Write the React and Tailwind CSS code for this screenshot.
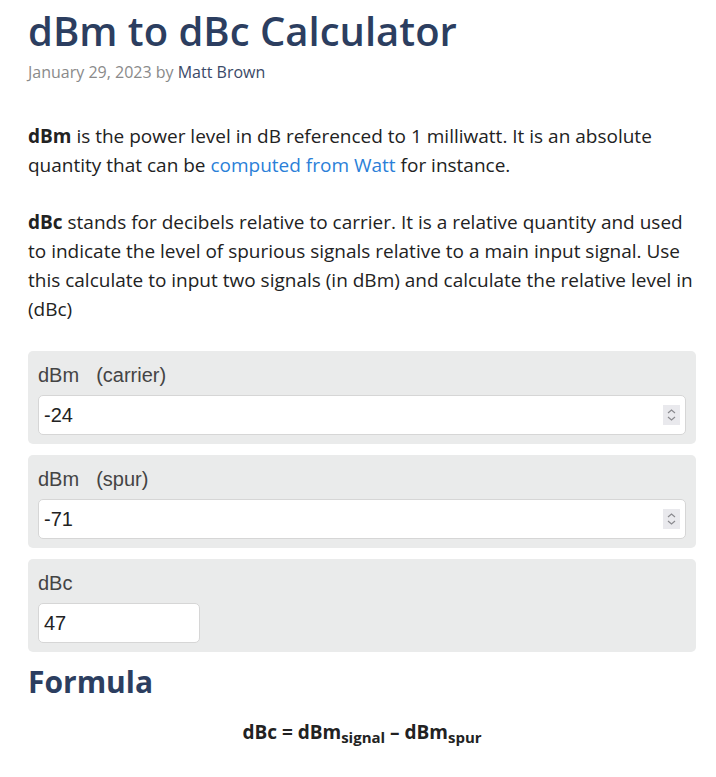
import React from "react";

function Spinner() {
  return (
    <div className="absolute right-[6px] top-1/2 -translate-y-1/2 w-[17px] h-[20px] bg-[#e9e9ed] flex items-center justify-center">
      <svg width="9" height="14" viewBox="0 0 9 14" fill="none" stroke="#8a8a8f" strokeWidth="1.2">
        <path d="M1 5 L4.5 2 L8 5" />
        <path d="M1 9 L4.5 12 L8 9" />
      </svg>
    </div>
  );
}

function Field({ label, sub, value, narrow, spin }) {
  return (
    <div className="bg-[#eaebeb] rounded-[5px] px-[10px] pt-[12px] pb-[9px]">
      <div className="text-[20px] leading-[24px] text-[#444] mb-[8px]" style={{ fontFamily: '"Liberation Sans", Arial, sans-serif' }}>
        {label}
        {sub && <span className="ml-[17px]">{sub}</span>}
      </div>
      <div className={"relative " + (narrow ? "w-[162px]" : "w-full")}>
        <input
          readOnly
          value={value}
          className="w-full h-[40px] bg-white border border-[#d6d6d6] rounded-[5px] px-[5px] text-[20px] text-[#222] outline-none"
          style={{ fontFamily: '"Liberation Sans", Arial, sans-serif' }}
        />
        {spin && <Spinner />}
      </div>
    </div>
  );
}

export default function App() {
  return (
    <div className="bg-white min-h-[777px] pl-[28px] pr-[20px] pt-[6px]" style={{ fontFamily: '"Open Sans", sans-serif' }}>
      <h1 className="text-[40px] leading-[50px] font-semibold text-[#2c3e60]">dBm to dBc Calculator</h1>
      <div className="text-[16px] leading-[22px] text-[#8a8a8a] mt-[5px]">
        January 29, 2023 by <span className="text-[#3b4a68]">Matt Brown</span>
      </div>
      <div className="text-[19px] leading-[29px] text-[#222] mt-[39px]">
        <p>
          <b className="font-bold">dBm</b> is the power level in dB referenced to 1 milliwatt. It is an absolute quantity that can be{" "}
          <span className="text-[#2b7fd8]">computed from Watt</span> for instance.
        </p>
        <p className="mt-[28px]">
          <b className="font-bold">dBc</b> stands for decibels relative to carrier. It is a relative quantity and used to indicate the level of spurious signals relative to a main input signal. Use this calculate to input two signals (in dBm) and calculate the relative level in (dBc)
        </p>
      </div>
      <div className="mt-[27px] flex flex-col gap-[11px]">
        <Field label="dBm" sub="(carrier)" value="-24" spin />
        <Field label="dBm" sub="(spur)" value="-71" spin />
        <Field label="dBc" value="47" narrow />
      </div>
      <h2 className="text-[30px] leading-[40px] font-bold text-[#2c3e60] mt-[10px]">Formula</h2>
      <div className="text-center font-bold text-[19px] text-[#222] mt-[16px]">
        dBc = dBm<sub className="text-[15px]">signal</sub> – dBm<sub className="text-[15px]">spur</sub>
      </div>
    </div>
  );
}
